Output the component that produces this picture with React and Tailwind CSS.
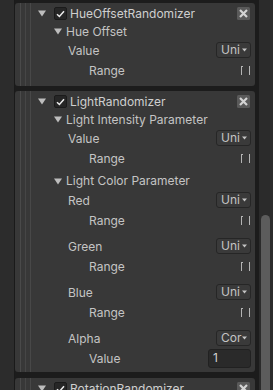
import React from "react";

const Tri = ({ c = "#bdbdbd" }) => (
  <svg width="8" height="7" viewBox="0 0 8 7" className="shrink-0">
    <path d="M0 0.5 H8 L4 6.5Z" fill={c} />
  </svg>
);

const Check = () => (
  <div className="w-[13px] h-[13px] shrink-0 rounded-[2px] bg-[#262626] border border-[#1b1b1b] flex items-center justify-center">
    <svg width="9" height="8" viewBox="0 0 9 8">
      <path d="M1 4.2 L3.4 6.5 L8 1.2" stroke="#ececec" strokeWidth="1.5" fill="none" />
    </svg>
  </div>
);

const Close = () => (
  <svg width="13" height="13" viewBox="0 0 13 13" className="shrink-0">
    <rect width="13" height="13" rx="1.5" fill="#5a5a5a" />
    <path d="M3 3L10 10M10 3L3 10" stroke="#d4d4d4" strokeWidth="2.2" />
  </svg>
);

const Drop = ({ t }) => (
  <div className="w-[35px] h-[16px] rounded-[3px] border border-[#262626] bg-[#3a3a3a] flex items-center pl-[4px] pr-[3px] overflow-hidden">
    <span className="leading-none">{t}</span>
    <svg width="5" height="4" viewBox="0 0 5 4" className="ml-auto shrink-0">
      <path d="M0 0.5H5L2.5 3.5Z" fill="#c4c4c4" />
    </svg>
  </div>
);

const Header = ({ name }) => (
  <div className="h-[19px] flex items-center pl-[7px] pr-[5px]">
    <Tri />
    <div className="ml-[8px]"><Check /></div>
    <span className="ml-[3px] text-[#cfcfcf]">{name}</span>
    <div className="ml-auto"><Close /></div>
  </div>
);

const Sub = ({ name, h = "h-[17px]" }) => (
  <div className={`${h} flex items-center pl-[23px]`}>
    <Tri />
    <span className="ml-[4px]">{name}</span>
  </div>
);

const ValueRow = ({ label = "Value", t = "Uni" }) => (
  <div className="h-[20px] flex items-center pl-[37px] pr-[4px]">
    <span className="pt-[1px]">{label}</span>
    <div className="ml-auto"><Drop t={t} /></div>
  </div>
);

const RangeRow = () => (
  <div className="h-[20px] flex items-center pl-[58px] pr-[5px]">
    <span className="pt-[1px]">Range</span>
    <div className="ml-auto flex items-center gap-[6px]">
      <div className="w-[2px] h-[9px] border-l border-t border-[#b4b4b4]" />
      <div className="w-[1px] h-[9px] bg-[#b4b4b4]" />
    </div>
  </div>
);

const Lines = () => (
  <div className="w-[16px] shrink-0 self-stretch flex pl-[5px] gap-[4px]">
    <div className="w-[1px] bg-[#4a4a4a]" />
    <div className="w-[1px] bg-[#464646]" />
    <div className="w-[1px] bg-[#484848]" />
  </div>
);

const Card = ({ children, className = "" }) => (
  <div className={`rounded-[3px] bg-[#383838] flex ${className}`}>
    <Lines />
    <div className="flex-1 flex flex-col">{children}</div>
  </div>
);

export default function App() {
  return (
    <div
      className="w-[273px] h-[390px] overflow-hidden flex bg-[#2c2c2c] text-[12px] text-[#c4c4c4]"
      style={{ fontFamily: "Inter, 'Noto Sans', sans-serif" }}
    >
      <div className="w-[14px] shrink-0 bg-[#2c2c2c]" />
      <div className="w-[245px] shrink-0 bg-[#1c1c1c] border-l border-[#1a1a1a] pr-[4px] flex flex-col">
        <Card className="mt-[3px]">
          <div className="pt-[1px]" />
          <Header name="HueOffsetRandomizer" />
          <Sub name="Hue Offset" />
          <ValueRow />
          <RangeRow />
          <div className="h-[6px]" />
        </Card>
        <Card className="mt-[5px]">
          <div className="pt-[1px]" />
          <Header name="LightRandomizer" />
          <Sub name="Light Intensity Parameter" />
          <ValueRow />
          <RangeRow />
          <div className="h-[4px]" />
          <Sub name="Light Color Parameter" h="h-[18px]" />
          <ValueRow label="Red" />
          <RangeRow />
          <div className="h-[6px]" />
          <ValueRow label="Green" />
          <RangeRow />
          <div className="h-[6px]" />
          <ValueRow label="Blue" />
          <RangeRow />
          <div className="h-[6px]" />
          <ValueRow label="Alpha" t="Cor" />
          <div className="h-[20px] flex items-center pl-[58px] pr-[4px]">
            <span className="pt-[1px]">Value</span>
            <div className="ml-auto w-[43px] h-[19px] rounded-[3px] bg-[#2a2a2a] border border-[#212121] flex items-center pl-[4px]">
              <span className="text-[#d2d2d2]">1</span>
            </div>
          </div>
          <div className="h-[4px]" />
        </Card>
        <Card className="mt-[6px] flex-1">
          <div className="pt-[1px]" />
          <Header name="RotationRandomizer" />
        </Card>
      </div>
      <div className="w-[14px] shrink-0 bg-[#2b2b2b] flex flex-col pt-[215px] pl-[2px]">
        <div className="w-[9px] flex-1 rounded-t-full bg-[#5c5c5c]" />
      </div>
    </div>
  );
}
